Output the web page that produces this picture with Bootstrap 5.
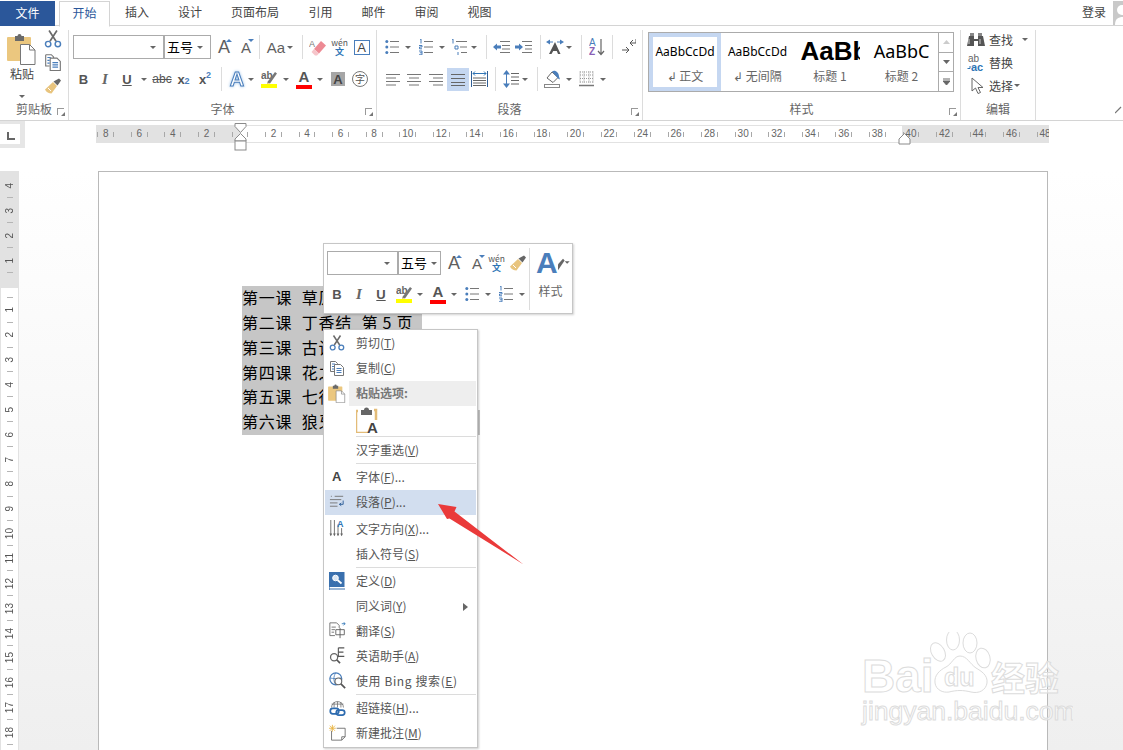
<!DOCTYPE html>
<html lang="zh-CN">
<head>
<meta charset="utf-8">
<title>Word</title>
<link href="https://cdn.jsdelivr.net/npm/bootstrap@5.3.0/dist/css/bootstrap.min.css" rel="stylesheet">
<style>
html,body{margin:0;height:750px;overflow:hidden;background:#fff}
body{font-family:"Noto Sans CJK SC","Liberation Sans",sans-serif;font-size:12px;color:#444;position:relative}
.tabs{height:26px;border-bottom:1px solid #d4d4d4;position:relative}
.tabs .nav-link{height:26px;padding:0 0 2px;display:flex;align-items:center;justify-content:center;color:#444;font-size:12px;border:0}
.t-file{width:55px;margin-top:1px;background:#2b579a;color:#fff!important;margin-right:4px;height:25px!important}
.t-on{width:51px;margin-top:1px;border:1px solid #d4d4d4!important;border-bottom:1px solid #fff!important;color:#2b579a!important;background:#fff}
.t54{width:54px}.t52{width:52px}.t78{width:78px}.t53{width:53px}
.login{color:#444;margin-top:-2px}
.avatar{width:10px;height:24px;background:#c9c9c9;margin:1px 0 0 7px;overflow:hidden}
.ribbon{height:95px;border-bottom:1px solid #d4d4d4;position:relative}
.g{height:90px;margin-top:4px;border-right:1px solid #dcdcdc;position:relative;flex:none}
.g1{width:69px}.g2{width:308px;padding:5px 0 0 4px}.g3{width:266px;padding:5px 0 0 8px}.g4{width:318px;padding:2px 0 0 5px}.g5{width:75px;padding:0 0 0 6px}
.lbl{position:absolute;left:0;right:0;top:70px;text-align:center;color:#666;font-size:12px;line-height:18px}
.lch{position:absolute;right:4px;top:78px;width:7px;height:7px;border-left:1px solid #999;border-bottom:0;border-top:1px solid #999}
.lch::after{content:"";position:absolute;right:-1px;bottom:-1px;width:0;height:0;border-left:4px solid transparent;border-bottom:4px solid #777}
.pcol{width:36px;margin-left:4px;padding-top:3px;flex:none}
.plab{line-height:14px;margin-top:2px}
.pcar{height:8px;width:8px;margin-top:3px}
.ccol{margin-left:4px;flex:none}
.ccol svg+svg{margin-top:5px}
.ccol svg:last-child{margin-top:7px}
.r{display:flex;align-items:center;height:24px;flex:none}
.r+.r{margin-top:8px}
.r>*{flex:none}
.s1{width:1px}.s2{width:2px}.s3{width:3px}.s4{width:4px}.s5{width:5px}.s6{width:6px}.s7{width:7px}.s8{width:8px}.s9{width:9px}
.v{width:1px;height:24px;background:#dcdcdc}
.c{width:8px;height:24px;display:flex;align-items:center;justify-content:center}
.c::before{content:"";border:3px solid transparent;border-top:3.5px solid #666;border-bottom:0}
.combo{height:24px;border:1px solid #ababab;background:#fff;display:flex;align-items:center;justify-content:space-between;color:#000;padding:0 6px 0 2px;font-size:13px;position:relative;white-space:nowrap}
.w91{width:91px}.w47{width:47px}.w71{width:71px}.w43{width:43px;padding-right:2px}
.tb{display:flex;align-items:center;justify-content:center;height:24px;position:relative;color:#555;font-family:"Liberation Sans",sans-serif;line-height:1}
.w16{width:16px}.w17{width:17px}.w18{width:18px}.w20{width:20px}.w21{width:21px}.w22{width:22px}.w24{width:24px}.w14{width:14px}.w15{width:15px}
.fb{font-weight:700;font-size:13px}.fi{font-style:italic;font-family:"Liberation Serif",serif;font-size:15px;font-weight:700;color:#666}.fu{text-decoration:underline;font-weight:700;font-size:13px}
.big{font-size:18px;color:#5f5f5f}.big-s{font-size:15px;color:#5f5f5f}
.glow{font-size:20px;font-weight:700;color:#fff;-webkit-text-stroke:1px #4a7ebb;filter:drop-shadow(0 0 1.5px #9cc2e8)}
.tri-u::after,.tri-d::after{content:"";position:absolute;right:0;top:4px;border:3px solid transparent}
.tri-u::after{border-top:0;border-bottom:3px solid #4a7ebb}
.tri-d::after{border-bottom:0;border-top:3px solid #4a7ebb}
.sm{font-size:9px;color:#4a7ebb;font-weight:700}
.red-bar{display:block;width:16px;height:4px;position:absolute;left:0;bottom:2px;background:#f00}
.a-bar{font-size:15px;font-weight:700;color:#555;padding-bottom:5px}
.gray-a{width:14px;height:14px;background:#a6a6a6;color:#444;font-size:13px;font-weight:700;display:flex;align-items:center;justify-content:center}
.circ{width:16px;height:16px;border:1px solid #777;border-radius:50%;font-size:10px;color:#555;display:flex;align-items:center;justify-content:center;font-family:"Noto Sans CJK SC",sans-serif}
.boxa{width:16px;height:15px;border:1px solid #4a7ebb;color:#444;display:flex;align-items:center;justify-content:center;font-size:13px}
.wen{font-size:8.5px;color:#555;display:flex;flex-direction:column;align-items:center;line-height:9px;font-family:"Noto Sans CJK SC",sans-serif}
.wen b{color:#2e75b6;font-size:9px;font-weight:700}
.just{background:#c5d7f1;height:23px;display:flex;align-items:center;justify-content:center}
.gal{width:306px;height:60px;border:1px solid #ababab;display:flex}
.st{flex:none;display:flex;flex-direction:column;align-items:center;height:58px;overflow:hidden;font-family:"Noto Sans",sans-serif;color:#000;position:relative}
.st em{font-style:normal;height:36px;display:flex;align-items:center;white-space:nowrap}
.st small{font-size:12px;color:#666;font-family:"Noto Sans CJK SC",sans-serif;line-height:14px}
.st1{width:72px;border:4px solid #c5d7f1;height:58px}
.st1 em{height:30px;font-size:12px}
.st1 small{margin-top:2px}
.st2{width:73px}.st2 em{font-size:12px;height:34px;margin-top:2px}
.st3{width:72px}.st3 em{font-size:26px;font-weight:700;width:59px;overflow:hidden;font-family:"Liberation Sans",sans-serif}
.st4{width:71px}.st4 em{font-size:18px;font-family:"Noto Sans",sans-serif}
.sb{width:15px;margin-left:auto;border-left:1px solid #ababab;display:flex;flex-direction:column}
.sb span{flex:1;border-bottom:1px solid #ababab;display:flex;align-items:center;justify-content:center}
.sb span:last-child{border-bottom:0}
.e-r{display:flex;align-items:center;height:23px;color:#444;position:relative;top:-2px}
.e-r span{font-size:12px}
.hbar{height:50px;position:relative}
.corner{width:25px;height:27px;background:#e6e6e6;padding:3px 5px 4px 0;flex:none}
.corner div{background:#fff;height:100%;position:relative}
.corner div::after{content:"";position:absolute;left:7px;top:8px;width:8px;height:8px;border-left:2px solid #666;border-bottom:2px solid #666}
.hrul{width:953px;height:18px;margin:4px 0 0 71px;position:relative;overflow:hidden;flex:none;
 background:linear-gradient(90deg,#e2e2e2 144px,#fff 144px,#fff 806px,#e2e2e2 806px);border-top:1px solid #e2e2e2;border-bottom:1px solid #e2e2e2;display:flex;padding-left:0;color:#666}
.hr-in{display:flex;margin-left:-7px;flex:none}
.hr-in span{width:33.55px;flex:none;padding:0 8.4px;display:flex;justify-content:space-between;align-items:center;font:10px/16px "Liberation Sans",sans-serif;color:#666}
.hr-in span b{font-weight:400;width:0;display:flex;justify-content:center;white-space:nowrap}
.hr-in span::before,.hr-in span::after{content:"";width:1px;height:5px;background:#a8a8a8}
.mrk{position:absolute}
.mk1{left:234px;top:2px}
.mk2{left:898px;top:12px}
.main{height:579px;background:linear-gradient(#fff,#efefef);display:flex;position:relative}
.vrul{width:19px;flex:none;height:579px;overflow:hidden;background:linear-gradient(#e2e2e2 117px,#fff 117px);border-right:1px solid #e2e2e2;border-left:1px solid #e2e2e2;padding-top:2.6px}
.vrul span{height:24.85px;display:flex;align-items:center;justify-content:center;position:relative;font:10px/12px "Liberation Sans",sans-serif;color:#555}
.vrul span b{font-weight:400;writing-mode:vertical-rl;transform:rotate(180deg)}
.vrul span::after{content:"";position:absolute;left:6px;bottom:0;width:6px;height:1px;background:#b5b5b5}
.page{margin-left:79px;width:950px;background:#fff;border:1px solid #b9b9b9;border-bottom:0;padding:114px 0 0 143px;flex:none;height:579px}
.sel{display:block;height:24.85px;line-height:23px;background:#c6c6c6;color:#000;font-size:16px;letter-spacing:.7px;word-spacing:5.4px;white-space:nowrap;overflow:hidden;width:180px}
.sel.x{width:238px}
.sel .tight{word-spacing:0}
.mini{position:absolute;left:323px;top:243px;width:250px;height:71px;background:#fff;border:1px solid #c6c6c6;box-shadow:1px 1px 2px rgba(0,0,0,.18);display:flex;padding:7px 0 0 3px;z-index:3}
.mini .r+.r{margin-top:7px}
.mini .lw{width:202px;flex:none}
.mini .v2{width:1px;background:#dcdcdc;height:62px;margin-top:-3px;flex:none}
.mini .rt{flex:none;width:41px;text-align:center;color:#666}
.rtop{height:30px;margin-top:-3px}
.bigA{font:700 30px/30px "Liberation Sans",sans-serif;color:#4a7ebb;margin-left:6px}
.rlab{margin-top:6px;line-height:14px}
.menu.dropdown-menu{display:block;position:absolute;left:323px;top:329px;width:155px;height:419px;min-width:0;border:1px solid #c6c6c6;border-radius:0;padding:1px 1px;margin:0;background:#fff;box-shadow:1px 1px 2px rgba(0,0,0,.2);z-index:2;font-size:12px;list-style:none}
.menu .dropdown-item{height:25px;padding:0 0 2px;display:flex;align-items:center;color:#555;font-size:12px;position:relative;background:transparent;white-space:nowrap}
.menu .dropdown-item u{text-underline-offset:1px}
.mi{width:31px;flex:none;display:flex;align-items:center;justify-content:flex-start;padding-left:4px;height:25px;color:#444;font-family:"Liberation Sans",sans-serif;font-weight:700;font-size:13px}
.mi-a{padding-left:7px}
.menu .dropdown-item.on{background:#d2deef}
.menu .head{background:#eee;margin-left:24px;color:#777;font-weight:700;padding:0 0 2px 7px;height:25px;display:flex;align-items:center;position:relative}
.menu .head svg{position:absolute;left:-21px;top:3px}
.pst{height:28px;padding:1px 0 0 31px}
.menu .dropdown-divider{border-top:1px solid #dcdcdc;margin:0 0 1px 31px;opacity:1}
.d4{padding-top:2px}
.d-mt{margin-top:2px}
.arr{position:absolute;right:8px;top:8.5px;border:4px solid transparent;border-left:5px solid #666;border-right:0}
.over{position:absolute;z-index:4;pointer-events:none}
.col-arrow{right:0;top:80px}
.arrow{left:430px;top:495px}
.wm{left:858px;top:632px;z-index:5}
.bing{letter-spacing:.6px}
</style>
</head>
<body>
<svg width="0" height="0" class="position-absolute">
<defs>
<symbol id="cut" viewBox="0 0 16 16"><path d="M4.500 .5l6.200 9.500M11.500 .5L5.300 10" stroke="#6a6a6a" stroke-width="1.500" fill="none"/><circle cx="3.700" cy="12.500" r="2.400" fill="none" stroke="#4a7ebb" stroke-width="1.300"/><circle cx="12.300" cy="12.500" r="2.400" fill="none" stroke="#4a7ebb" stroke-width="1.300"/></symbol>
<symbol id="copy" viewBox="0 0 16 16"><path d="M1.500 1.500h5l2 2v1M1.500 1.500v10h3.500" stroke="#777" fill="none"/><path d="M5.500 4.500h6l3 3v8h-9z" fill="#fff" stroke="#777"/><path d="M3 4h3M3 6.500h2M3 9h2M7.500 8.500h5M7.500 10.500h5M7.500 12.500h5" stroke="#4a7ebb"/></symbol>
<symbol id="brush" viewBox="0 0 18 16"><path d="M1 11.500L9 4l4 4-5.500 7.500C5 15.500 2 14 1 11.500z" fill="#e8c47e"/><path d="M9.500 3.500L15 .5l2 2L13.500 7.500z" fill="#666"/><path d="M4 10l3 3" stroke="#fff"/></symbol>
<symbol id="paste" viewBox="0 0 30 32"><rect x="0" y="4" width="24" height="24" rx="1" fill="#ebc77f"/><path d="M8 3h2.500a2 2 0 0 1 4 0H17v5H8z" fill="#6a6a6a"/><path d="M13.500 11.500h9l5.500 5.500v14.500H13.500z" fill="#fff" stroke="#777"/><path d="M22.500 11.500V17H28" fill="none" stroke="#777"/></symbol>
<symbol id="bul" viewBox="0 0 14 16"><circle cx="1.800" cy="2.500" r="1.500" fill="#4a7ebb"/><circle cx="1.800" cy="8" r="1.500" fill="#4a7ebb"/><circle cx="1.800" cy="13.500" r="1.500" fill="#4a7ebb"/><path d="M5 2.500h9M5 8h9M5 13.500h9" stroke="#777"/></symbol>
<symbol id="num" viewBox="0 0 14 16"><path d="M1 .5l1-.5v4.500M0 6.500h3v1.500h-2.500v1.800H3M0 12h3v3.800H0M.8 13.800H3" stroke="#4a7ebb" fill="none"/><path d="M5 2.500h9M5 8h9M5 13.500h9" stroke="#777"/></symbol>
<symbol id="mul" viewBox="0 0 17 16"><path d="M1 .5l1-.5v4.500" stroke="#4a7ebb" fill="none"/><path d="M4 7h3v3H4zM7 13v3" stroke="#4a7ebb" fill="none"/><path d="M5 2.500h11M9 8h7M10 13.500h6" stroke="#777"/></symbol>
<symbol id="out" viewBox="0 0 17 16"><path d="M7 2.500h10M9 6.500h8M9 10h8M7 13.500h10" stroke="#777"/><path d="M0 8l4-3.500v2h4v3H4v2z" fill="#4a7ebb"/></symbol>
<symbol id="ind" viewBox="0 0 17 16"><path d="M7 2.500h10M10 6.500h7M10 10h7M7 13.500h10" stroke="#777"/><path d="M8 8L4 4.500v2H0v3h4v2z" fill="#4a7ebb"/></symbol>
<symbol id="dir" viewBox="0 0 18 16"><path d="M0 3l4-2.500v5zM18 3l-4-2.500v5z" fill="#4a7ebb"/><path d="M4 3h3M11 3h3" stroke="#4a7ebb"/><path d="M9 3l5.500 12h-2.500l-1.200-3h-3.600L5.500 15H3z" fill="#555"/></symbol>
<symbol id="az" viewBox="0 0 16 18"><text x="0" y="8" font-family="Liberation Sans" font-size="10" fill="#4a7ebb">A</text><text x="0" y="17" font-family="Liberation Sans" font-size="10" fill="#8a5fb5" font-weight="700">Z</text><path d="M12 1v15M9 13l3 3.500 3-3.500" stroke="#666" fill="none" stroke-width="1.200"/></symbol>
<symbol id="pil" viewBox="0 0 14 16"><path d="M5 5h6V1M5 5l3-3M5 5l3 3" stroke="#555" fill="none" transform="translate(3 -1)"/><path d="M0 11h7M4 8l3 3-3 3" stroke="#555" fill="none"/></symbol>
<symbol id="al" viewBox="0 0 16 14"><path d="M1 2.500h14M1 6h10M1 9.500h14M1 13h10" stroke="#777"/></symbol>
<symbol id="ac" viewBox="0 0 16 14"><path d="M1 2.500h14M3 6h10M1 9.500h14M3 13h10" stroke="#777"/></symbol>
<symbol id="ar" viewBox="0 0 16 14"><path d="M1 2.500h14M5 6h10M1 9.500h14M5 13h10" stroke="#777"/></symbol>
<symbol id="aj" viewBox="0 0 16 14"><path d="M1 2.500h14M1 6.500h14M1 10.500h14M1 13.500h14" stroke="#666"/></symbol>
<symbol id="dis" viewBox="0 0 17 18"><path d="M.5 1v16M16.500 1v16" stroke="#2f5f97"/><path d="M2 3.500h13M4 1.500L2 3.500l2 2M13 1.500l2 2-2 2" stroke="#2f74b5" fill="none"/><path d="M2 8h13M2 10.500h13M2 13h13M2 15.500h13" stroke="#666"/></symbol>
<symbol id="ls" viewBox="0 0 16 18"><path d="M3.500 3v12" stroke="#4a7ebb"/><path d="M3.500 0L7 4.500H0zM3.500 18L7 13.500H0z" fill="#4a7ebb"/><path d="M8 3.500h8M8 7h8M8 10.500h8M8 14h8" stroke="#666"/></symbol>
<symbol id="sh" viewBox="0 0 18 18"><path d="M3 8l5-6 6 5.500-5 5z" fill="#fff" stroke="#666"/><path d="M8 1.500c3-2 7 1 7 5l1 3-2-1z" fill="#4a7ebb"/><rect x=".5" y="14.500" width="15" height="3" fill="#fff" stroke="#888"/></symbol>
<symbol id="bd" viewBox="0 0 15 16"><path d="M1 1h13M1 4h13M1 7.500h13M1 11h13M1 .5v12M5 .5v12M10 .5v12M14 .5v12" stroke="#999" stroke-dasharray="1 1" fill="none"/><path d="M0 14.500h15" stroke="#777" stroke-width="1.500"/></symbol>
<symbol id="era" viewBox="0 0 17 18"><path d="M5 11L12 3l5 4.500L10 15.500z" fill="#ed8a94"/><path d="M5 11l5 4.500-2 2H6L2.500 14z" fill="#f6c5ca"/><text x="0" y="9" font-size="9" fill="#777" font-family="Liberation Sans">A</text></symbol>
<symbol id="hl" viewBox="0 0 16 18"><text x="0" y="9" font-size="10" fill="#666" font-family="Liberation Sans" font-weight="700">ab</text><path d="M6 12.500L14 2l2 1.500-7 10z" fill="#777"/><path d="M6 12.500l3 1-3 .5z" fill="#e8c47e"/><rect y="14" width="16" height="4" fill="#ff0"/></symbol>
<symbol id="bin" viewBox="0 0 18 16"><path d="M2 4h5v3h4V4h5l2 10h-7V9H7v5H0z" fill="#555"/><rect x="3" y="1" width="4" height="3" fill="#888"/><rect x="11" y="1" width="4" height="3" fill="#888"/><path d="M2 7v5M13 7v5" stroke="#ccc"/></symbol>
<symbol id="rep" viewBox="0 0 18 18"><text x="1" y="8" font-size="10" fill="#666" font-family="Liberation Sans">ab</text><text x="4" y="17" font-size="11" fill="#2e75b6" font-family="Liberation Sans" font-weight="700">ac</text><path d="M3 12v2.500H.5" stroke="#2e75b6" fill="none"/></symbol>
<symbol id="cur" viewBox="0 0 14 18"><path d="M1 1v13l3.500-3 2.500 5.500 2.500-1L7 10.500h5z" fill="#fff" stroke="#666"/></symbol>
<symbol id="para" viewBox="0 0 18 18"><path d="M6 3.500h9M2 3.500h1M1 7h12M1 10.500h8M1 14h8" stroke="#777"/><path d="M15 8v4h-4M11 12l2-1.500M11 12l2 1.500" stroke="#2e5f99" fill="none"/></symbol>
<symbol id="tdir" viewBox="0 0 20 22"><path d="M2 1v17M6 1v17M10 6v12M14 10v8" stroke="#666"/><path d="M.5 16L2 19l1.500-3zM4.500 16L6 19l1.500-3zM8.500 16L10 19l1.500-3zM12.500 16L14 19l1.500-3z" fill="#666"/><text x="9" y="9" font-size="10" font-weight="700" fill="#2e75b6" font-family="Liberation Sans">A</text></symbol>
<symbol id="def" viewBox="0 0 16 18"><rect x="0" y="0" width="15.500" height="15" fill="#3a70ae"/><path d="M0 0v18M0 17h16" stroke="#3a70ae" stroke-width="1.200"/><circle cx="6.500" cy="6" r="2.800" fill="#dbe7f4" stroke="#fff"/><path d="M8.500 8l4 3.500" stroke="#fff" stroke-width="1.800"/></symbol>
<symbol id="tr" viewBox="0 0 20 20"><path d="M1 1h8l3 3v3M1 1v15h6" fill="none" stroke="#666"/><path d="M3 6h5M3 9h4M3 12h3" stroke="#666"/><path d="M8 9h10v6H8zM13 7v12" fill="none" stroke="#555"/><path d="M15 2h4M17 0l2 2-2 2" stroke="#2e75b6" fill="none"/></symbol>
<symbol id="eng" viewBox="0 0 20 20"><path d="M11 1h7M11 1v10h7M11 6h6" stroke="#555" fill="none" stroke-width="1.300"/><circle cx="6" cy="12" r="4.200" fill="none" stroke="#666" stroke-width="1.500"/><path d="M9 15l4 4" stroke="#555" stroke-width="2"/></symbol>
<symbol id="bng" viewBox="0 0 20 20"><circle cx="8" cy="8" r="7" fill="none" stroke="#4a7ebb" stroke-width="1.500"/><path d="M1 7c4 1 10 1 14 0M8 1C5 5 5 11 8 15" stroke="#4a7ebb" fill="none"/><circle cx="11" cy="11" r="4" fill="#fff" stroke="#666" stroke-width="1.300"/><path d="M14 14l5 5" stroke="#555" stroke-width="2"/></symbol>
<symbol id="lnk" viewBox="0 0 20 20"><path d="M3 10a7 7 0 1 1 14 0" fill="#fff" stroke="#777"/><path d="M3 6h14M10 3v7M6 3.500v6.500M14 3.500v6.500" stroke="#777"/><rect x="1.500" y="11" width="10" height="6.500" rx="3" fill="none" stroke="#2e6cb0" stroke-width="2"/><rect x="8.500" y="13" width="10" height="6" rx="3" fill="none" stroke="#2e6cb0" stroke-width="2"/></symbol>
<symbol id="cmt" viewBox="0 0 20 20"><path d="M3 8v11h12l4-4V5H9" fill="#fff" stroke="#666"/><path d="M15 19v-4h4" fill="none" stroke="#666"/><path d="M4 1v8M0 5h8M1 2l6 6M7 2L1 8" stroke="#e8b341"/></symbol>
<symbol id="clipa" viewBox="0 0 22 26"><path d="M2 4H0v22h12" fill="none" stroke="#e3bc78" stroke-width="2.500"/><path d="M18 3h2v10" fill="none" stroke="#e3bc78" stroke-width="2.500"/><path d="M5 3h3a2.500 2.500 0 0 1 5 0h3v5H5z" fill="#666"/></symbol>
</defs>
</svg>

<div class="tabs d-flex">
  <ul class="nav flex-nowrap">
    <li class="nav-item"><a class="nav-link t-file">文件</a></li>
    <li class="nav-item"><a class="nav-link t-on">开始</a></li>
    <li class="nav-item"><a class="nav-link t54">插入</a></li>
    <li class="nav-item"><a class="nav-link t52">设计</a></li>
    <li class="nav-item"><a class="nav-link t78">页面布局</a></li>
    <li class="nav-item"><a class="nav-link t53">引用</a></li>
    <li class="nav-item"><a class="nav-link t53">邮件</a></li>
    <li class="nav-item"><a class="nav-link t53">审阅</a></li>
    <li class="nav-item"><a class="nav-link t53">视图</a></li>
  </ul>
  <div class="ms-auto d-flex align-items-center">
    <span class="login">登录</span>
    <div class="avatar"><svg width="10" height="24" viewBox="0 0 10 24"><circle cx="9" cy="9" r="5" fill="#fff"/><path d="M2 24c0-6 3-8 8-8v8z" fill="#fff"/></svg></div>
  </div>
</div>

<div class="ribbon d-flex">
  <div class="g g1">
    <div class="d-flex">
      <div class="d-flex flex-column align-items-center pcol">
        <svg width="30" height="32"><use href="#paste"/></svg>
        <span class="plab">粘贴</span>
        <span class="c pcar"></span>
      </div>
      <div class="d-flex flex-column ccol">
        <svg width="18" height="18"><use href="#cut"/></svg>
        <svg width="18" height="18"><use href="#copy"/></svg>
        <svg width="18" height="16"><use href="#brush"/></svg>
      </div>
    </div>
    <div class="lbl">剪贴板</div><i class="lch"></i>
  </div>

  <div class="g g2">
    <div class="r">
      <div class="combo w91"><span></span><i class="c"></i></div>
      <div class="combo w47">五号<i class="c"></i></div>
      <i class="s5"></i><span class="tb w16 big tri-u">A</span><i class="s6"></i><span class="tb w16 big-s tri-d">A</span><i class="s5"></i><i class="v"></i><i class="s6"></i>
      <span class="tb w20 big-s">Aa</span><i class="c"></i><i class="s8"></i><i class="v"></i><i class="s6"></i>
      <svg width="17" height="18"><use href="#era"/></svg><i class="s5"></i>
      <span class="wen w17">wén<b>文</b></span><i class="s5"></i>
      <span class="tb w17"><span class="boxa">A</span></span>
    </div>
    <div class="r">
      <span class="tb w21 fb">B</span><span class="tb w22 fi">I</span><span class="tb w22 fu">U</span><i class="s2"></i><i class="c"></i><i class="s3"></i>
      <span class="tb w22"><s>abc</s></span><span class="tb w21 fb">x<sub class="sm">2</sub></span><span class="tb w22 fb">x<sup class="sm">2</sup></span><i class="s5"></i><i class="v"></i><i class="s7"></i>
      <span class="tb w16 glow">A</span><i class="s2"></i><i class="c"></i><i class="s2"></i><i class="s4"></i>
      <svg width="16" height="18"><use href="#hl"/></svg><i class="s5"></i><i class="c"></i><i class="s6"></i>
      <span class="tb w16 a-bar">A<i class="red-bar"></i></span><i class="s4"></i><i class="c"></i><i class="s6"></i>
      <span class="tb w16"><span class="gray-a">A</span></span><i class="s6"></i>
      <span class="tb w16"><span class="circ">字</span></span>
    </div>
    <div class="lbl">字体</div><i class="lch"></i>
  </div>

  <div class="g g3">
    <div class="r">
      <svg width="14" height="16"><use href="#bul"/></svg><i class="s5"></i><i class="c"></i><i class="s7"></i>
      <svg width="14" height="16"><use href="#num"/></svg><i class="s5"></i><i class="c"></i><i class="s5"></i>
      <svg width="17" height="16"><use href="#mul"/></svg><i class="s2"></i><i class="c"></i><i class="s8"></i><i class="v"></i><i class="s6"></i>
      <svg width="17" height="16"><use href="#out"/></svg><i class="s5"></i>
      <svg width="17" height="16"><use href="#ind"/></svg><i class="s8"></i><i class="v"></i><i class="s5"></i>
      <svg width="18" height="16"><use href="#dir"/></svg><i class="s1"></i><i class="c"></i><i class="s8"></i><i class="v"></i><i class="s7"></i>
      <svg width="16" height="18"><use href="#az"/></svg><i class="s7"></i><i class="v"></i><i class="s9"></i>
      <svg width="14" height="16"><use href="#pil"/></svg>
    </div>
    <div class="r">
      <svg width="16" height="14"><use href="#al"/></svg><i class="s5"></i>
      <svg width="16" height="14"><use href="#ac"/></svg><i class="s6"></i>
      <svg width="16" height="14"><use href="#ar"/></svg><i class="s3"></i>
      <span class="just w22"><svg width="16" height="14"><use href="#aj"/></svg></span><i class="s2"></i>
      <svg width="17" height="18"><use href="#dis"/></svg><i class="s7"></i><i class="v"></i><i class="s7"></i>
      <svg width="16" height="18"><use href="#ls"/></svg><i class="s2"></i><i class="c"></i><i class="s8"></i><i class="v"></i><i class="s6"></i>
      <svg width="18" height="18"><use href="#sh"/></svg><i class="s3"></i><i class="c"></i><i class="s6"></i>
      <svg width="15" height="16"><use href="#bd"/></svg><i class="s5"></i><i class="c"></i>
    </div>
    <div class="lbl">段落</div><i class="lch"></i>
  </div>

  <div class="g g4">
    <div class="gal">
      <div class="st st1"><em>AaBbCcDd</em><small>↲ 正文</small></div>
      <div class="st st2"><em>AaBbCcDd</em><small>↲ 无间隔</small></div>
      <div class="st st3"><em>AaBbC</em><small>标题 1</small></div>
      <div class="st st4"><em>AaBbC</em><small>标题 2</small></div>
      <div class="sb"><span><svg width="7" height="4"><path d="M0 4l3.500-4L7 4z" fill="#ccc"/></svg></span><span><svg width="7" height="4"><path d="M0 0l3.500 4L7 0z" fill="#666"/></svg></span><span><svg width="7" height="7"><path d="M0 1h7M0 3l3.500 4L7 3z" stroke="#666" fill="#666"/></svg></span></div>
    </div>
    <div class="lbl">样式</div><i class="lch"></i>
  </div>

  <div class="g g5">
    <div class="e-r"><svg width="18" height="16"><use href="#bin"/></svg><span class="ms-1">查找</span><i class="c ms-2"></i></div>
    <div class="e-r"><svg width="18" height="18"><use href="#rep"/></svg><span class="ms-1">替换</span></div>
    <div class="e-r"><svg class="ms-1" width="14" height="18"><use href="#cur"/></svg><span class="ms-1">选择</span><i class="c"></i></div>
    <div class="lbl">编辑</div>
  </div>
  <svg class="over col-arrow" width="8" height="8"><path d="M0 7l6-6" stroke="#777" stroke-width="1.200"/></svg>
</div>

<div class="hbar d-flex align-items-start">
  <div class="corner"><div></div></div>
  <div class="hrul">
    <div class="hr-in">
      <span><b>8</b></span><span><b>6</b></span><span><b>4</b></span><span><b>2</b></span><span><b></b></span><span><b>2</b></span><span><b>4</b></span><span><b>6</b></span><span><b>8</b></span><span><b>10</b></span><span><b>12</b></span><span><b>14</b></span><span><b>16</b></span><span><b>18</b></span><span><b>20</b></span><span><b>22</b></span><span><b>24</b></span><span><b>26</b></span><span><b>28</b></span><span><b>30</b></span><span><b>32</b></span><span><b>34</b></span><span><b>36</b></span><span><b>38</b></span><span><b>40</b></span><span><b>42</b></span><span><b>44</b></span><span><b>46</b></span><span><b>48</b></span>
    </div>
  </div>
  <svg class="mrk mk1" width="13" height="28" viewBox="0 0 13 28"><path d="M1 .5h11v3L6.500 9.500 1 3.500z" fill="#fff" stroke="#8a8a8a"/><path d="M6.500 10.500L12 16v2H1v-2z" fill="#fff" stroke="#8a8a8a"/><rect x="1" y="18" width="11" height="9" fill="#fff" stroke="#8a8a8a"/></svg>
  <svg class="mrk mk2" width="13" height="12" viewBox="0 0 13 12"><path d="M6.500 .5L12 6v5H1V6z" fill="#fff" stroke="#8a8a8a"/></svg>
</div>

<div class="main">
  <div class="vrul">
    <span><b>4</b></span><span><b>3</b></span><span><b>2</b></span><span><b>1</b></span><span><b></b></span><span><b>1</b></span><span><b>2</b></span><span><b>3</b></span><span><b>4</b></span><span><b>5</b></span><span><b>6</b></span><span><b>7</b></span><span><b>8</b></span><span><b>9</b></span><span><b>10</b></span><span><b>11</b></span><span><b>12</b></span><span><b>13</b></span><span><b>14</b></span><span><b>15</b></span><span><b>16</b></span><span><b>17</b></span><span><b>18</b></span>
  </div>
  <div class="page">
    <span class="sel">第一课 草原 <span class="tight">第 1 页</span></span>
    <span class="sel">第二课 丁香结 <span class="tight">第 5 页</span></span>
    <span class="sel">第三课 古诗词三首</span>
    <span class="sel">第四课 花之歌</span>
    <span class="sel">第五课 七律·长征</span>
    <span class="sel x">第六课 狼牙山五壮士</span>
  </div>
</div>

<div class="mini">
  <div class="lw">
    <div class="r">
      <div class="combo w71"><span></span><i class="c"></i></div>
      <div class="combo w43">五号<i class="c"></i></div>
      <i class="s5"></i><span class="tb w16 big tri-u">A</span><i class="s7"></i><span class="tb w16 big-s tri-d">A</span><i class="s3"></i>
      <span class="wen w17">wén<b>文</b></span><i class="s4"></i>
      <svg width="18" height="16"><use href="#brush"/></svg>
    </div>
    <div class="r">
      <span class="tb w20 fb">B</span><span class="tb w24 fi">I</span><span class="tb w20 fu">U</span><i class="s5"></i>
      <svg width="16" height="18"><use href="#hl"/></svg><i class="s4"></i><i class="c"></i><i class="s6"></i>
      <span class="tb w16 a-bar">A<i class="red-bar"></i></span><i class="s4"></i><i class="c"></i><i class="s7"></i>
      <svg width="14" height="16"><use href="#bul"/></svg><i class="s5"></i><i class="c"></i><i class="s7"></i>
      <svg width="14" height="16"><use href="#num"/></svg><i class="s5"></i><i class="c"></i>
    </div>
  </div>
  <div class="v2"></div>
  <div class="rt">
    <div class="d-flex align-items-center rtop">
      <span class="bigA">A</span><svg width="16" height="26" viewBox="0 0 16 26"><path d="M-6 21L6 8l2 2-9 13z" fill="#666"/><path d="M-10 25c0-3 1-5 4-5l3 2c-1 3-4 3-7 3z" fill="#4a7ebb"/><path d="M8 11l3 3 3-3z" fill="#666"/></svg>
    </div>
    <div class="rlab">样式</div>
  </div>
</div>

<ul class="menu dropdown-menu">
  <li><a class="dropdown-item"><span class="mi"><svg width="16" height="16"><use href="#cut"/></svg></span>剪切(<u>T</u>)</a></li>
  <li><a class="dropdown-item"><span class="mi"><svg width="16" height="16"><use href="#copy"/></svg></span>复制(<u>C</u>)</a></li>
  <li class="head"><svg width="18" height="19"><use href="#paste"/></svg>粘贴选项:</li>
  <li class="pst"><svg width="22" height="26" viewBox="0 0 22 26"><use href="#clipa"/><text x="11" y="26" font-family="Liberation Sans" font-size="15" font-weight="700" fill="#444">A</text></svg></li>
  <li class="d4"><hr class="dropdown-divider"></li>
  <li><a class="dropdown-item"><span class="mi"></span>汉字重选(<u>V</u>)</a></li>
  <li><hr class="dropdown-divider"></li>
  <li><a class="dropdown-item"><span class="mi mi-a">A</span>字体(<u>F</u>)...</a></li>
  <li><a class="dropdown-item on"><span class="mi"><svg width="17" height="17"><use href="#para"/></svg></span>段落(<u>P</u>)...</a></li>
  <li class="d-mt"><a class="dropdown-item"><span class="mi"><svg width="18" height="20"><use href="#tdir"/></svg></span>文字方向(<u>X</u>)...</a></li>
  <li><a class="dropdown-item"><span class="mi"></span>插入符号(<u>S</u>)</a></li>
  <li><hr class="dropdown-divider"></li>
  <li><a class="dropdown-item"><span class="mi"><svg width="16" height="18"><use href="#def"/></svg></span>定义(<u>D</u>)</a></li>
  <li><a class="dropdown-item"><span class="mi"></span>同义词(<u>Y</u>)<i class="arr"></i></a></li>
  <li><a class="dropdown-item"><span class="mi"><svg width="17" height="17"><use href="#tr"/></svg></span>翻译(<u>S</u>)</a></li>
  <li><a class="dropdown-item"><span class="mi"><svg width="17" height="17"><use href="#eng"/></svg></span>英语助手(<u>A</u>)</a></li>
  <li><a class="dropdown-item bing"><span class="mi"><svg width="17" height="17"><use href="#bng"/></svg></span>使用 Bing 搜索(<u>E</u>)</a></li>
  <li><hr class="dropdown-divider"></li>
  <li><a class="dropdown-item"><span class="mi"><svg width="17" height="17"><use href="#lnk"/></svg></span>超链接(<u>H</u>)...</a></li>
  <li><a class="dropdown-item"><span class="mi"><svg width="17" height="17"><use href="#cmt"/></svg></span>新建批注(<u>M</u>)</a></li>
</ul>

<svg class="over arrow" width="100" height="75" viewBox="430 495 100 75"><path d="M438 504l18.500 3-2 4.500 69 53-74-46-2.500 .5z" fill="#ea3a3a"/></svg>

<svg class="over wm" width="215" height="100" viewBox="858 632 215 100">
  <g fill="rgba(255,255,255,.55)" stroke="#dcdcdc" stroke-width="1">
    <text x="862" y="692" font-family="Liberation Sans" font-size="46" font-weight="700">Bai</text>
    <ellipse cx="938" cy="652" rx="6.500" ry="10" transform="rotate(-30 938 652)"/><ellipse cx="953" cy="640" rx="6.500" ry="10"/><ellipse cx="970" cy="643" rx="7" ry="10"/><ellipse cx="983" cy="658" rx="7" ry="10" transform="rotate(-15 983 658)"/>
    <path d="M960 656c-6 0-8 8-14 11-6 3-12 8-11 16 1 7 8 10 14 9 8-2 14-2 22 0 8 2 15-2 16-9 1-8-6-12-11-15-6-4-9-12-16-12z"/>
    <text x="944" y="686" font-family="Liberation Sans" font-size="25" font-weight="700">du</text>
    <text x="991" y="691" font-family="Noto Sans CJK SC" font-size="34" font-weight="700">经验</text>
    <text x="862" y="720" font-family="Liberation Sans" font-size="26.500">jingyan.baidu.com</text>
  </g>
</svg>
<script src="https://cdn.jsdelivr.net/npm/bootstrap@5.3.0/dist/js/bootstrap.bundle.min.js"></script>
</body>
</html>
